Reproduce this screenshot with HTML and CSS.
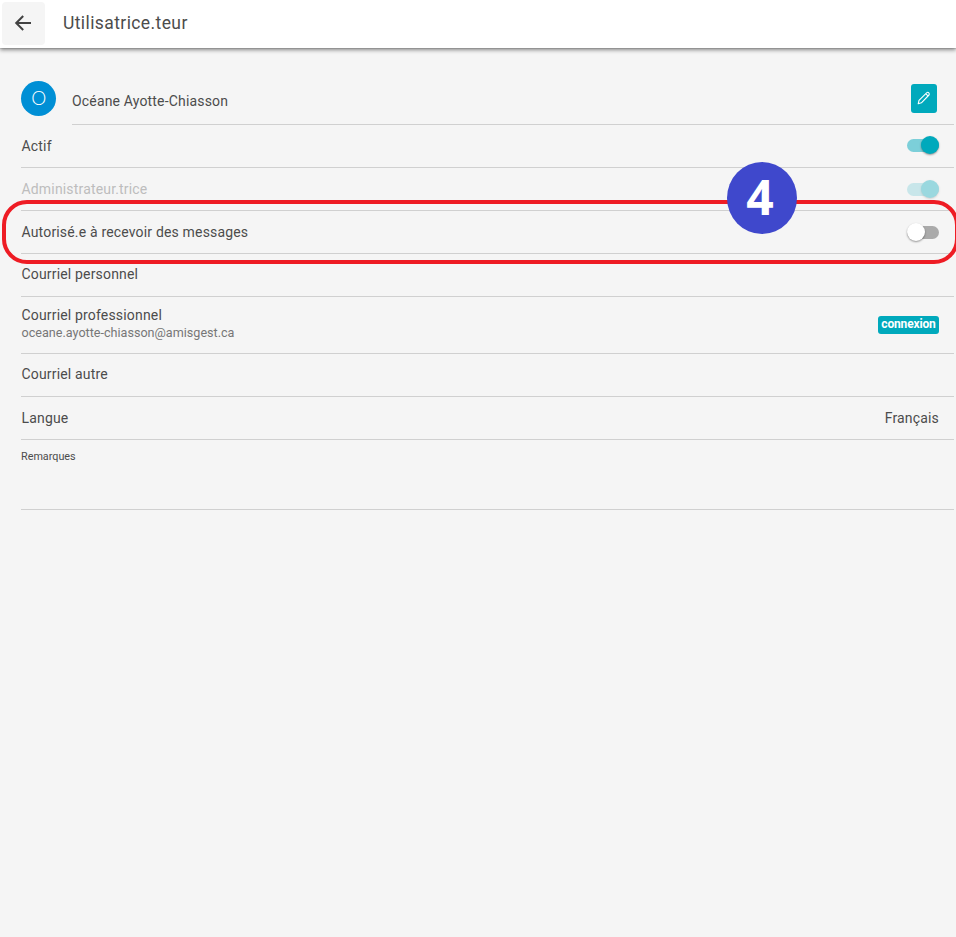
FILE: index.html
```html
<!DOCTYPE html>
<html lang="fr">
<head>
<meta charset="utf-8">
<title>Utilisatrice.teur</title>
<link rel="stylesheet" href="styles.css">
</head>
<body>
<header class="toolbar">
  <button class="back" aria-label="Retour">
    <svg width="18" height="18" viewBox="0 0 18 18" fill="none" stroke="#424242" stroke-width="2"><path d="M17 9H2.500M9.200 2L2.200 9l7 7"/></svg>
  </button>
  <h1>Utilisatrice.teur</h1>
</header>
<main class="list">
  <section class="profile">
    <div class="avatar">O</div>
    <div class="profile-body">
      <span class="label">Océane Ayotte-Chiasson</span>
      <button class="edit" aria-label="Modifier">
        <svg width="14" height="14" viewBox="0 0 14 14" fill="none" stroke="#fff" stroke-width="1.100" stroke-linejoin="round"><path d="M1.200 12.800l.8-3.400 7.600-7.600q1.200-1 2.200 0t.2 2.200l-7.600 7.800zM8.700 2.700l2.500 2.500"/></svg>
      </button>
    </div>
  </section>
  <div class="row active"><span class="label">Actif</span><span class="toggle on"></span></div>
  <div class="row disabled"><span class="label">Administrateur.trice</span><span class="toggle on"></span></div>
  <div class="row"><span class="label">Autorisé.e à recevoir des messages</span><span class="toggle"></span></div>
  <div class="row raised"><span class="label">Courriel personnel</span></div>
  <div class="row double">
    <div class="stack"><span class="label">Courriel professionnel</span><span class="email">oceane.ayotte-chiasson@amisgest.ca</span></div>
    <span class="badge">connexion</span>
  </div>
  <div class="row raised"><span class="label">Courriel autre</span></div>
  <div class="row"><span class="label">Langue</span><span class="label">Français</span></div>
  <div class="notes">Remarques</div>
</main>
<div class="highlight"></div>
<div class="step"><span>4</span></div>
</body>
</html>
```
FILE: styles.css
```css
* { box-sizing: border-box; }
body {
  margin: 0;
  height: 937px;
  position: relative;
  overflow: hidden;
  background: #f5f5f5;
  color: #4c4c4c;
  font-family: Roboto, "Liberation Sans", sans-serif;
}
button { border: 0; padding: 0; display: flex; align-items: center; justify-content: center; }
.toolbar {
  height: 48px;
  padding: 0 2px 2px;
  display: flex;
  align-items: center;
  background: #fff;
  box-shadow: 0 2px 4px rgba(0, 0, 0, .45), 0 1px 0 rgba(0, 0, 0, .08);
}
.back { width: 43px; height: 43px; border-radius: 4px; background: #f5f5f5; padding-right: 1px; }
h1 { margin: 0 0 0 18px; font-size: 17.5px; line-height: 24px; font-weight: 400; letter-spacing: .4px; }
.list { padding: 25px 2px 0 21px; }
.profile { height: 52px; display: flex; }
.avatar {
  width: 35px; height: 35px; margin: 8.400px 15.600px 0 .4px;
  border-radius: 50%;
  background: #008fd5; color: #fff;
  font-family: Lato, sans-serif;
  font-size: 19px; font-weight: 300; line-height: 34px; text-align: center;
}
.profile-body {
  flex: 1; display: flex; align-items: center; justify-content: space-between;
  padding: 4px 17px 0 0;
  border-bottom: 1px solid #d0d0d0;
}
.edit { width: 26px; height: 29px; border-radius: 3px; background: #00a9bc; margin-bottom: 5px; }
.label { font-size: 14px; line-height: 20px; letter-spacing: .17px; }
.row {
  height: 43px; padding: 0 15px 0 .5px;
  display: flex; align-items: center; justify-content: space-between;
  border-bottom: 1px solid #d0d0d0;
}
.raised { padding-bottom: 2px; }
.active .toggle { margin-bottom: 2px; }
.double { height: 57px; }
.stack { display: flex; flex-direction: column; padding-bottom: 4px; }
.stack .label { line-height: 18px; }
.email { font-size: 12.6px; line-height: 17px; color: #777; }
.badge {
  width: 61px; height: 18px; border-radius: 3px;
  background: #00a9bc; color: #fff;
  font-size: 12px; font-weight: 700; line-height: 17px; letter-spacing: -.15px; text-align: center;
}
.toggle { width: 32px; height: 13px; border-radius: 7px; background: #aaa; display: flex; align-items: center; }
.toggle::before {
  content: ""; width: 18px; height: 18px; border-radius: 50%;
  background: #fff; box-shadow: 0 1px 2px rgba(0, 0, 0, .4);
}
.toggle.on { background: #7ccfd9; justify-content: flex-end; }
.toggle.on::before { background: #00a9bc; }
.disabled .label { color: #bdbdbd; }
.disabled .toggle { opacity: .37; }
.notes { height: 70px; padding-top: 9px; font-size: 10.8px; line-height: 15px; border-bottom: 1px solid #d0d0d0; }
.highlight {
  position: absolute; left: 2px; top: 200px; width: 957px; height: 64px;
  border: 4px solid #ee1c24; border-radius: 25px;
}
.step {
  position: absolute; left: 727px; top: 162px; width: 70px; height: 72px;
  border-radius: 50%; background: #3f48cc; color: #fff;
  display: flex; align-items: center; justify-content: center;
  font-family: "Open Sans", sans-serif; font-size: 48px; font-weight: 700; line-height: 68px;
}
.step span { padding: 0 4px 3px 0; }
```
